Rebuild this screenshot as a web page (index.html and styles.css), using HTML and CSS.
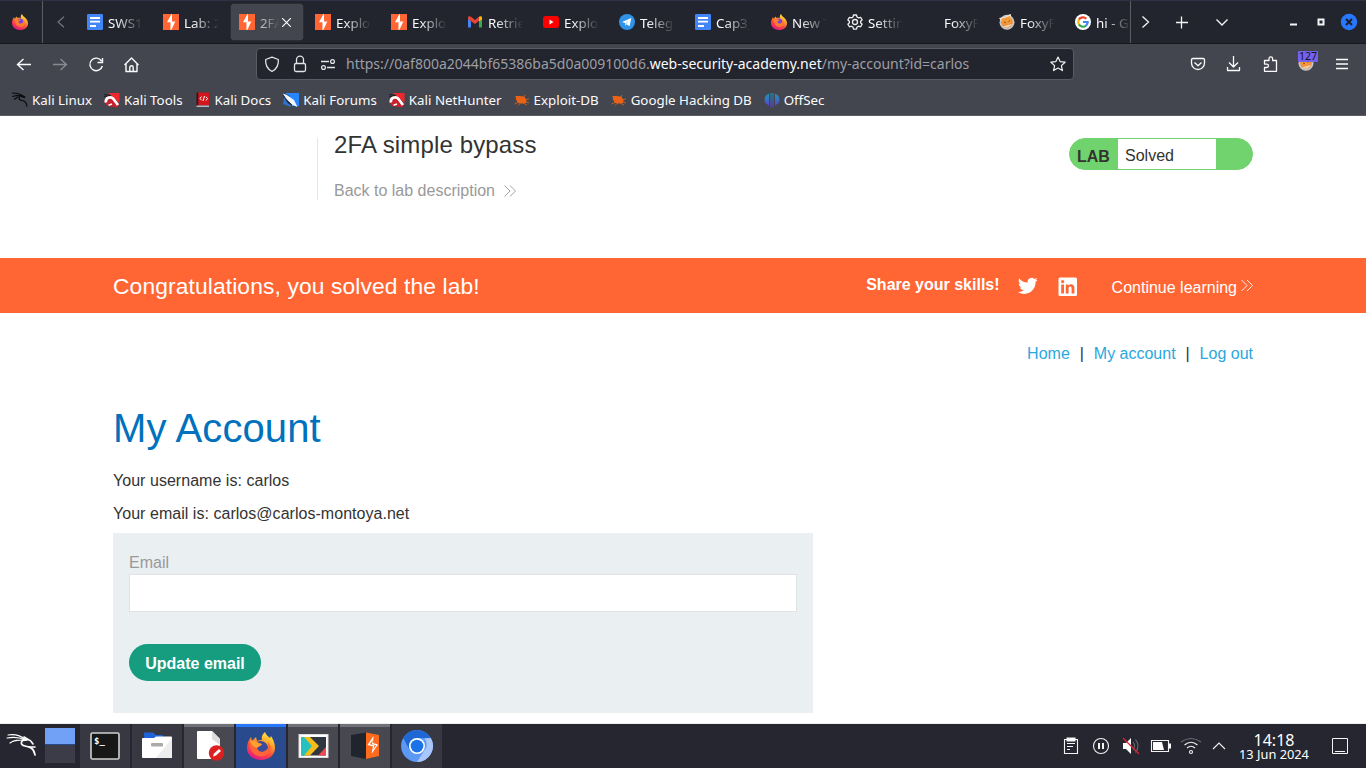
FILE: index.html
```html
<!DOCTYPE html>
<html lang="en">
<head>
<meta charset="utf-8">
<title>2FA simple bypass</title>
<link rel="stylesheet" href="styles.css">
</head>
<body>
<svg width="0" height="0" class="defs">
  <defs>
    <linearGradient id="ffBody" x1=".8" y1="0" x2=".3" y2="1"><stop offset="0" stop-color="#fff04a"/><stop offset=".35" stop-color="#ffa52a"/><stop offset=".65" stop-color="#ff4a3c"/><stop offset="1" stop-color="#e0178c"/></linearGradient>
    <linearGradient id="offG" gradientUnits="userSpaceOnUse" x1="0" y1="0" x2="0" y2="16"><stop offset="0" stop-color="#12a5a8"/><stop offset="1" stop-color="#6435e0"/></linearGradient>
    <symbol id="firefox" viewBox="0 0 32 32">
      <path d="M20 0c1 3 3 5 6 7 3 3 6 6 6 12 0 8-7 13-16 13S0 26 0 18c0-5 2-9 4-12l1 4 4-5 2 3c2-1 5-1 7 0-1-3 0-6 2-8z" fill="url(#ffBody)"/>
      <circle cx="16" cy="16" r="7" fill="#7a43df"/>
      <path d="M5 9c3-1 6 0 8 2 2 0 3 0 4 1-1 2-4 2-4 4 1 4 6 4 9 1 1-3 0-5-1-7 4 2 6 7 4 11-2 5-9 7-14 3-4-3-6-8-6-15z" fill="#ff7a2c"/>
    </symbol>
    <symbol id="firefoxBig" viewBox="0 0 28 28">
      <path d="M18 0c1 3 3 4 5 6l1-2c2 3 4 7 4 12 0 7-6 12-14 12S0 23 0 16c0-5 2-8 4-11l1 4 4-4 1 4c2-1 4-1 5-1-1-4 1-6 3-8z" fill="url(#ffBody)"/>
      <path d="M10 10c5-3 11 1 11 6 0 4-4 5-7 5-5 0-8-3-8-7 1-1 2 0 3 0l5-2z" fill="#3b4c9c"/>
      <path d="M3 9c3-1 6 0 8 2l4 1c0 2-3 2-5 4 1 4 6 5 9 2 3-2 3-5 1-8 4 2 5 8 2 11-4 5-12 4-16 0-3-3-4-8-3-12z" fill="#ff6338"/>
      <path d="M3 9c3-1 6 0 8 2l4 1c-1 2-4 2-5 4-3-1-6-3-7-7z" fill="#ffa12c"/>
    </symbol>
    <symbol id="docs" viewBox="0 0 16 16"><rect width="16" height="16" rx="1.200" fill="#4285f4"/><path d="M3 4h10M3 7.700h10M3 12h6" stroke="#fff" stroke-width="1.800"/></symbol>
    <symbol id="burp" viewBox="0 0 16 16"><rect width="16" height="16" fill="#ff6633"/><path d="M8.500 0L4 8.300h3.500V16h.8l4-8.500H9V0z" fill="#fff"/></symbol>
    <symbol id="gmail" viewBox="0 0 16 16"><path d="M1 3v10.500h3V7.500z" fill="#4285f4"/><path d="M15 3v10.500h-3V7.500z" fill="#34a853"/><path d="M1 3.800C1 2 3 2 4 2.800L8 6l4-3.200v4L8 10 1 5z" fill="#ea4335"/><path d="M12 2.800C13 2 15 2 15 3.800V5.500L12 7.500z" fill="#fbbc04"/></symbol>
    <symbol id="youtube" viewBox="0 0 16 16"><rect y="2" width="16" height="12" rx="2.500" fill="#f00"/><path d="M6.500 5.500v5l4-2.500z" fill="#fff"/></symbol>
    <symbol id="telegram" viewBox="0 0 16 16"><circle cx="8" cy="8" r="8" fill="#2f93e8"/><path d="M3 8l9.300-4-1.700 8.200-3-2-1.300 1.500V9z" fill="#fff"/><path d="M6.300 9.200l3.800-3-2.600 3.700z" fill="#b5d8f4"/></symbol>
    <symbol id="gear" viewBox="0 0 16 16"><path d="M6.500 1h3l.5 2 1.600.9 2-.6 1.500 2.600-1.500 1.400v1.500l1.500 1.400-1.500 2.600-2-.6-1.600.9-.5 2h-3l-.5-2-1.600-.9-2 .6L.9 10.200 2.400 8.800V7.300L.9 5.900l1.500-2.600 2 .6L6 3z" fill="none" stroke="#eee" stroke-width="1.300" stroke-linejoin="round"/><circle cx="8" cy="8" r="2.500" fill="none" stroke="#eee" stroke-width="1.300"/></symbol>
    <symbol id="foxy" viewBox="0 0 16 16"><circle cx="8" cy="8.200" r="7.500" fill="#c3c5c9"/><circle cx="8" cy="8.200" r="5.800" fill="#f0913a"/><path d="M0 4l5-1 6-3 1 .5v4L7 6 2 7z" fill="#e9dfd2"/><path d="M2 5l5-1.500 4-1.500 2 5-4 3-5-1z" fill="#f59a37"/><path d="M4 12.500c3 2 7 1 9-2.500l-4 1z" fill="#e9d5b8"/><path d="M5 8l2 .5M11 6.500l-1.500 1" stroke="#8a5223"/></symbol>
    <symbol id="google" viewBox="0 0 16 16"><circle cx="8" cy="8" r="8" fill="#fff"/><g fill="none" stroke-width="2.200"><path d="M3.900 5.600A4.700 4.700 0 0 1 11.300 4.700" stroke="#ea4335"/><path d="M3.900 5.600a4.700 4.700 0 0 0 0 4.800" stroke="#fbbc05"/><path d="M3.900 10.400a4.700 4.700 0 0 0 7.100 1.200" stroke="#34a853"/><path d="M11 11.600A4.700 4.700 0 0 0 12.700 8H8" stroke="#4285f4"/></g></symbol>
    <symbol id="hunter" viewBox="0 0 16 16"><path d="M4 1H15.500V11z" fill="#f0262d"/><path d="M0 2.500l7 1M0 4.500l6-.5" stroke="#1d2025" stroke-width="1.200"/><path d="M.5 9C1 5 5 3 9 5l6.500 7.500-2.500 3-9-1.500C2 13 .5 11.500.5 9z" fill="#c5202c"/><path d="M2 10.500C1 6 6.500 3.500 9.500 7l4.500 6" fill="none" stroke="#fff" stroke-width="2.700"/><path d="M4.500 13.300L8 12" stroke="#fff" stroke-width="1.500"/></symbol>
    <symbol id="bug" viewBox="0 0 16 16"><path d="M2 4l3 0 5 .5 2.500 3.500-.5 3-4 .5-4-.5-2-3.500z" fill="#ed6115"/><path d="M1 4.500l3 2M.5 12L5 10M4 13.500l3-3M10 5l1-2M11 7.500l4-.5M11 9.500l4 1.500M9 11l4 2" stroke="#d9681e" stroke-width=".8"/></symbol>
    <symbol id="chev" viewBox="0 0 12 12"><path d="M.5.500L6 6 .5 11.500M6 .500L11.500 6 6 11.500" fill="none" stroke="currentColor" stroke-width=".9"/></symbol>
  </defs>
</svg>

<header class="browser">
  <div class="tabs">
    <div class="pinned"><svg class="i16"><use href="#firefox"/></svg></div>
    <div class="scroll-left"><svg width="8" height="12" viewBox="0 0 8 12"><path d="M7 .7L1 6l6 5.300" fill="none" stroke="#75767c" stroke-width="1.200"/></svg></div>
    <div class="tablist">
      <div class="tab"><svg class="i16"><use href="#docs"/></svg><span>SWS1</span></div>
      <div class="tab"><svg class="i16"><use href="#burp"/></svg><span>Lab: 2</span></div>
      <div class="tab active"><svg class="i16"><use href="#burp"/></svg><span>2FA</span><svg class="close" viewBox="0 0 8 8"><path d="M0 0l8 8M8 0L0 8" stroke="#fff" stroke-width="1"/></svg></div>
      <div class="tab"><svg class="i16"><use href="#burp"/></svg><span>Explo</span></div>
      <div class="tab"><svg class="i16"><use href="#burp"/></svg><span>Explo</span></div>
      <div class="tab"><svg class="i16"><use href="#gmail"/></svg><span>Retrie</span></div>
      <div class="tab"><svg class="i16"><use href="#youtube"/></svg><span>Explo</span></div>
      <div class="tab"><svg class="i16"><use href="#telegram"/></svg><span>Teleg</span></div>
      <div class="tab"><svg class="i16"><use href="#docs"/></svg><span>Cap3_</span></div>
      <div class="tab"><svg class="i16"><use href="#firefox"/></svg><span>New T</span></div>
      <div class="tab"><svg class="i16"><use href="#gear"/></svg><span>Settin</span></div>
      <div class="tab"><svg class="i16"></svg><span>FoxyP</span></div>
      <div class="tab"><svg class="i16"><use href="#foxy"/></svg><span>FoxyP</span></div>
      <div class="tab"><svg class="i16"><use href="#google"/></svg><span>hi - G</span></div>
    </div>
    <svg class="tab-controls" width="235" height="43" viewBox="1131 0 235 43" fill="none" stroke="#f5f5f6" stroke-width="1.300">
      <path d="M1142.500 16.500l6 5.500-6 5.500M1176 22.500h12M1181.500 16.500v12M1216.500 19.500l5.500 5.500 5.500-5.500"/>
      <path d="M1290 24.500h7M1318.500 19.500h5v5h-5z" stroke-width="2"/>
      <circle cx="1349" cy="22" r="8.200" fill="#2777ff" stroke="none"/><path d="M1346 19l6 6M1352 19l-6 6" stroke="#1c202c" stroke-width="2"/>
    </svg>
  </div>

  <div class="toolbar">
    <svg class="nav" width="150" height="40" viewBox="0 44 150 40" fill="none" stroke="#fbfbfe" stroke-width="1.400">
      <path d="M31 64.500H18M23.500 59l-6 5.500 6 5.500"/>
      <path d="M53 64.500h13M60.500 59l6 5.500-6 5.500" stroke="#8a8b91"/>
      <path d="M101.500 61A6.300 6.300 0 1 0 102.300 66M102.500 58v4.500H97.500"/>
      <path d="M124.500 65l7-7 7 7M126 64v7.500h11V64M129.800 71v-3.500a1.700 1.700 0 0 1 3.400 0V71" stroke-linejoin="round"/>
    </svg>
    <div class="url">
      <svg width="88" height="30" viewBox="257 49 88 30" fill="none" stroke="#e4e4e7" stroke-width="1.300">
        <path d="M272 57.200l6.300 2.300c.5 5-1.800 9.500-6.300 12-4.500-2.500-6.800-7-6.300-12z" stroke-linejoin="round"/>
        <rect x="294.500" y="63.500" width="11" height="8" rx="1.500"/><path d="M296.500 63v-3.300a3.500 3.500 0 0 1 7 0V63"/>
        <path d="M321 61.500h8M327 67.500h8"/><circle cx="332.500" cy="61.500" r="1.900"/><circle cx="323.500" cy="67.500" r="1.900"/>
      </svg>
      <p>https://0af800a2044bf65386ba5d0a009100d6.<b>web-security-academy.net</b>/my-account?id=carlos</p>
      <svg class="star" width="16" height="16" viewBox="0 0 16 16"><path d="M8 1l2.100 4.600 5 .6-3.700 3.400 1 5L8 12.100l-4.400 2.500 1-5L.9 6.200l5-.6z" fill="none" stroke="#f0f0f2" stroke-width="1.200" stroke-linejoin="round"/></svg>
    </div>
    <div class="tools">
      <svg width="176" height="40" viewBox="1190 44 176 40" fill="none" stroke="#fbfbfe" stroke-width="1.300">
        <path d="M1193 58.500h10.200q1.300 0 1.300 1.300V63a6.500 6.500 0 0 1-13 0v-3.200q0-1.300 1.500-1.300zM1194.500 62.500l3.500 3.200 3.500-3.200" stroke-linejoin="round"/>
        <path d="M1233.500 56v10.500M1229 62.500l4.500 4.500 4.500-4.500M1227.500 67v3.500h12V67" stroke-linejoin="round"/>
        <path d="M1264.500 71.300v-3.800h2.300a1.700 1.700 0 0 0 0-3.400h-2.300v-3.600h4.500v-1.800a1.800 1.800 0 0 1 3.600 0v1.800h3.900v10.800z" stroke-linejoin="round"/>
        <path d="M1336 59.500h12M1336 64h12M1336 68.500h12"/>
      </svg>
      <div class="foxy"><svg class="i16"><use href="#foxy"/></svg><span>127</span></div>
    </div>
  </div>

  <nav class="bookmarks">
    <a><svg class="i16" viewBox="0 0 16 16" fill="none" stroke="#08090a" stroke-width="1.200"><path d="M0 1l6 .5 4 2M0 4.500l5-1 5 .5M2 7.500l4-2.500M10 4c-4 0-4 4 0 4.500 3 .3 4.500 2 5 6"/><path d="M9 3.500l4 2" stroke-width="2"/></svg>Kali Linux</a>
    <a><svg class="i16"><use href="#hunter"/></svg>Kali Tools</a>
    <a><svg class="i16" viewBox="0 0 16 16"><path d="M2 .500h12v13H2z" fill="#d3161b"/><path d="M1.500.500h1.800v13l-1.800 1z" fill="#3d1018"/><path d="M1.500 13.500H14V15H1.500z" fill="#aeb9c6"/><path d="M6.500 4.500L5 6.500l1.500 1.700M11 4.800l1.500 1.700L11 8.500M9.500 4L8 9" fill="none" stroke="#fff"/></svg>Kali Docs</a>
    <a><svg class="i16" viewBox="0 0 16 16"><path d="M2 1h14v13H9z" fill="#2786ff"/><path d="M2 1L0 12l8 3-2-6z" fill="#2786ff" opacity=".7"/><path d="M0 1.500L4 3l7 5 3.500 7-5-2L3 7z" fill="#f4f6f8"/><path d="M0 3l4 5 5 5-4-2zM1 1l6 3.500" fill="#20252c" stroke="#20252c" stroke-width=".5"/></svg>Kali Forums</a>
    <a><svg class="i16"><use href="#hunter"/></svg>Kali NetHunter</a>
    <a><svg class="i16"><use href="#bug"/></svg>Exploit-DB</a>
    <a><svg class="i16"><use href="#bug"/></svg>Google Hacking DB</a>
    <a><svg class="i16" viewBox="0 0 16 16"><path d="M5 1.500v12C-1 11-1 4 5 1.500zM7.500 1v14.500H6.500V1zM9.500 1v14.500H8.500V1zM11 1.500v12c6-2.500 6-9.500 0-12z" fill="url(#offG)"/></svg>OffSec</a>
  </nav>
</header>

<main class="page">
  <section class="lab wrap">
    <div class="lab-title">
      <h2>2FA simple bypass</h2>
      <a>Back to lab description <svg width="12" height="12"><use href="#chev"/></svg></a>
    </div>
    <div class="badge"><b>LAB</b><span>Solved</span></div>
  </section>
  <section class="banner">
    <div class="wrap">
      <h3>Congratulations, you solved the lab!</h3>
      <b>Share your skills!</b>
      <svg class="twitter" width="20" height="18" viewBox="0 0 24 20"><path d="M23.600 2.400c-.9.400-1.800.6-2.800.8 1-.6 1.800-1.500 2.100-2.700-.9.600-2 1-3.100 1.200A4.900 4.900 0 0 0 11.500 6C7.500 5.900 3.900 4 1.500 1 .2 3.200.9 6 3 7.500c-.8 0-1.500-.2-2.200-.6 0 2.200 1.500 4.300 3.900 4.800-.7.200-1.500.2-2.200.1.600 2 2.500 3.300 4.600 3.400A9.900 9.900 0 0 1 0 17.200c9.500 6 21.200-.5 21.200-12.200 1-.7 1.800-1.600 2.400-2.600z" fill="#fff"/></svg>
      <svg class="linkedin" width="20" height="20" viewBox="0 0 20 20"><rect x=".5" y=".5" width="18.500" height="18.500" rx="1.500" fill="#fff"/><g fill="#f63"><path d="M3.200 7.500H6v9H3.200zM7.800 7.500h2.600v1.300c1.600-2.500 6-2 6 2.200v5.500h-2.800v-5c0-3-3-2.500-3 0v5H7.800z"/><circle cx="4.600" cy="4.600" r="1.600"/></g></svg>
      <a>Continue learning<svg width="12" height="13"><use href="#chev"/></svg></a>
    </div>
  </section>
  <nav class="links wrap"><a>Home</a><i>|</i><a>My account</a><i>|</i><a>Log out</a></nav>
  <section class="account wrap">
    <h1>My Account</h1>
    <p>Your username is: carlos</p>
    <p>Your email is: carlos@carlos-montoya.net</p>
    <form>
      <label for="email">Email</label>
      <input id="email" type="email">
      <button type="button">Update email</button>
    </form>
  </section>
</main>

<footer class="taskbar">
  <svg class="kali" width="45" height="44" viewBox="0 724 45 44" fill="none" stroke="#fff" stroke-linecap="round"><path d="M8 735c6-1 12 0 18 5M7 738c6-1 12-1 18 2M10 743c4-3 8-3 14-3" stroke-width="1.200"/><path d="M26 740c-6 0-6 5-1 6 5 1 9 2 10 9" stroke-width="1.700"/><path d="M26 740c4-1 5 1 7 4M29 747l6 0M24 737l5 3" stroke-width="1.600"/></svg>
  <div class="pager"><i></i></div>
  <div class="task"><svg width="32" height="32" viewBox="0 0 32 32"><rect x="2" y="3" width="28" height="26" rx="1.500" fill="#171717" stroke="#d0d0ce" stroke-width="1.600"/><text x="5" y="14" class="prompt">$_</text></svg></div>
  <div class="task"><svg width="32" height="32" viewBox="0 0 32 32"><path d="M3 3.500q0-1 1-1h8l3 2.500h6q1 0 1 1v5H3z" fill="#1f63d6"/><path d="M2 8h11l2-1.500h15q1 0 1 1V27q0 1-1 1H2q-1 0-1-1V9q0-1 1-1z" fill="#fff"/><path d="M31 8v20H15z" fill="#ededed"/><rect x="10" y="13" width="12" height="3.500" rx="1" fill="#aaa"/></svg></div>
  <div class="task open"><svg width="32" height="32" viewBox="0 0 32 32"><path d="M5 1h14l8 8v20H5q-1 0-1-1V2q0-1 1-1z" fill="#fff"/><path d="M19 1l8 8v6l-8-6z" fill="#ddd"/><circle cx="23.500" cy="23" r="7.700" fill="#dc2020"/><path d="M20 26.500l1-3 5-4.500 2 2-5 4.500z" fill="#fff"/></svg></div>
  <div class="task current"><svg width="28" height="28" viewBox="0 0 28 28"><use href="#firefoxBig"/></svg></div>
  <div class="task open"><svg width="32" height="32" viewBox="0 0 32 32"><rect x="2" y="4.500" width="29" height="23" fill="#fff" stroke="#ddd"/><path d="M4 7h25v18.500H4z" fill="#303641"/><path d="M4 7h4l8 9-8 9.500H4z" fill="#26c0be"/><path d="M7 7h6l9 9-9 9.500H7l8-9.500z" fill="#f4bd19"/><path d="M29 17v8.500h-8z" fill="#f04a50"/></svg></div>
  <div class="task open"><svg width="32" height="32" viewBox="0 0 32 32"><path d="M2 5l15-2.500V29L2 26z" fill="#1f242d"/><path d="M17 2.500L30 5v21l-13 3z" fill="#ff6b1c"/><path d="M24.500 6L18.500 15l5.500 1.500L22.500 24 29 14.500 24 13z" fill="#fff"/><path d="M23.800 10l-3 4.200 4.700 1-1 4 2.500-4-4-1z" fill="#ff6b1c"/></svg></div>
  <div class="task"><svg width="34" height="34" viewBox="0 0 32 32"><circle cx="16" cy="16" r="15" fill="#5d98f5"/><path d="M3 8.500A15 15 0 0 1 29 8.500H16a8 8 0 0 0-7 11z" fill="#1f67d2"/><path d="M29 8.500A15 15 0 0 1 16 31l7-11a8 8 0 0 0 0-11z" fill="#a9c7fa"/><circle cx="16" cy="16" r="7.500" fill="#fff"/><circle cx="16" cy="16" r="6" fill="#1a73e8"/></svg></div>
  <svg class="tray" width="174" height="44" viewBox="1060 724 174 44" fill="none" stroke="#f3f3f3" stroke-width="1.100">
    <path d="M1064.500 739.500h13v14h-13zM1067 743.500h8M1067 746.500h6M1067 749.500h3"/><path d="M1067 738h8v3h-8z" fill="#fff"/>
    <circle cx="1101" cy="746" r="7.500"/><path d="M1099 743v6M1103 743v6" stroke-width="2"/>
    <path d="M1123 743h3l5-5v16l-5-5h-3z" fill="#fff" stroke="none"/><path d="M1133 742q3 4 0 8M1135.500 739.500q5 6.500 0 13" stroke="#686a70"/><path d="M1123 738l16 16" stroke="#d92430" stroke-width="1.300"/>
    <path d="M1151.500 740.500h17v11h-17z"/><path d="M1153 742h9l2 8h-11zM1169 743.500h2v5h-2z" fill="#fff" stroke="none"/>
    <circle cx="1191" cy="752" r="1.500"/><path d="M1187 748q4-3.500 8 0M1184.500 745q6.500-5.500 13 0"/><path d="M1181 742q10-7 20 0" stroke="#6d6e75"/><path d="M1213 749l6-6 6 6"/>
  </svg>
  <div class="clock"><span>14:18</span><small>13 Jun 2024</small></div>
  <svg class="desk" width="16" height="16" viewBox="0 0 16 16" fill="none" stroke="#f5f5f5"><path d="M.5.500h15v15H.5zM3 13.500h10"/></svg>
</footer>
</body>
</html>
```
FILE: styles.css
```css
* { box-sizing: border-box; }
body { margin: 0; width: 1366px; height: 768px; overflow: hidden; display: flex; flex-direction: column; background: #fff; font-family: "Liberation Sans", Arial, sans-serif; }
.defs { position: absolute; }
svg { display: block; flex: none; }
h1, h2, h3, p { margin: 0; font-weight: 400; }
.i16 { width: 16px; height: 16px; }

.browser { height: 116px; flex: none; font-family: "Noto Sans", sans-serif; font-size: 13.33px; color: #fbfbfe; background: #44464f; border-bottom: 1px solid #5d5e66; }
.tabs { height: 44px; display: flex; background: #23252e; border-top: 1px solid #303147; border-bottom: 1px solid #17181e; }
.pinned { width: 43px; padding: 13px 0 0 12px; border-right: 1px solid #5b5c63; }
.scroll-left { width: 36px; padding: 15px 0 0 14px; }
.tablist { width: 1052px; padding-top: 3px; display: flex; gap: 4px; overflow: hidden; border-right: 1px solid #5b5c63; }
.tab { width: 72px; height: 36px; flex: none; padding: 0 8px; display: flex; align-items: center; border-radius: 4px; }
.tab span { width: 36px; flex: none; margin-left: 5px; padding-top: 2px; overflow: hidden; white-space: nowrap; -webkit-mask-image: linear-gradient(to right, #000 22%, transparent 97%); mask-image: linear-gradient(to right, #000 22%, transparent 97%); }
.active { background: #44464f; box-shadow: 0 0 1px #777; }
.tab.active span { width: 20px; color: #b6b7bb; }
.close { width: 9px; height: 9px; margin-left: 2px; }
.tab-controls { margin-top: -1px; }

.toolbar { height: 40px; display: flex; align-items: flex-start; }
.nav { margin-right: 106px; }
.url { width: 818px; height: 32px; margin-top: 4px; display: flex; align-items: center; background: #23252e; border: 1px solid #5a5b63; border-radius: 4px; }
.url p { flex: 1; padding: 0 0 2px 1px; font-size: 14px; color: #9d9ea5; white-space: nowrap; }
.url b { font-weight: 400; color: #fbfbfe; }
.star { margin-right: 7px; }
.tools { position: relative; margin-left: 116px; }
.foxy { position: absolute; left: 108px; top: 11px; }
.foxy span { position: absolute; left: 0; top: -4px; width: 20px; height: 11px; background: #7561ec; border-radius: 1px; color: #15141a; font-size: 10.500px; line-height: 11px; text-align: center; }
.bookmarks { height: 31px; padding-left: 12px; display: flex; align-items: center; gap: 12px; }
.bookmarks a { display: flex; align-items: center; gap: 4px; white-space: nowrap; }

.page { height: 608px; flex: none; color: #333332; font-size: 16px; border-bottom: 1px solid #eee; overflow: hidden; }
.wrap { width: 1140px; margin: 0 auto; }
.lab { height: 142px; padding: 22px 0 0 204px; display: flex; justify-content: space-between; align-items: flex-start; }
.lab-title { height: 62px; padding-left: 16px; border-left: 1px solid #e6e6e6; }
.lab-title h2 { margin-top: -7px; font-size: 24px; line-height: 28px; letter-spacing: .15px; }
.lab-title a { margin-top: 23px; display: flex; align-items: center; gap: 9px; line-height: 18px; color: #999; }
.lab-title svg { margin-top: -1px; }
.badge { width: 184px; height: 32px; display: flex; background: #71d36e; border: 1px solid #71d36e; border-radius: 16px; overflow: hidden; }
.badge b { width: 48px; padding-left: 7px; line-height: 35px; }
.badge span { width: 98px; padding-left: 7px; line-height: 33px; background: #fff; }
.banner { height: 55px; background: #f63; color: #fff; }
.banner .wrap { height: 55px; display: flex; align-items: center; }
.banner h3 { flex: 1; padding-top: 2px; font-size: 22.8px; letter-spacing: .12px; }
.banner b { padding-bottom: 2px; }
.twitter { margin-left: 18px; }
.linkedin { margin: 2px 1px 0 20px; }
.banner a { margin-left: 33px; padding-top: 4px; display: flex; gap: 4px; }
.links { height: 82px; padding-top: 32px; display: flex; justify-content: flex-end; line-height: 18px; color: #29a7df; }
.links i { width: 24px; text-align: center; font-style: normal; color: #333; }
.account h1 { padding-top: 9px; margin-bottom: 19px; font-size: 40px; line-height: 49px; letter-spacing: .1px; color: #0071bc; }
.account p { height: 33px; line-height: 18px; letter-spacing: .035px; }
.account p + p { height: 28px; }
form { width: 700px; height: 180px; padding: 21px 16px 0; display: flex; flex-direction: column; align-items: flex-start; background: #eaeff2; }
label { line-height: 18px; color: #999; }
input { width: 668px; height: 38px; margin-top: 2px; padding: 0 8px; border: 1px solid #e0e3e4; background: #fff; }
button { width: 132px; height: 37px; margin-top: 32px; padding: 2px 0 0; border: 0; border-radius: 19px; background: #169c7f; color: #fff; font: bold 16px "Liberation Sans", sans-serif; }

.taskbar { height: 44px; flex: none; display: flex; align-items: stretch; color: #fff; background: #25262f; font-family: "Noto Sans", sans-serif; }
.pager { width: 30px; height: 35px; margin: 4px 5px 0 0; background: #3b3c47; }
.pager i { display: block; height: 17px; background: #71a1f7; border-bottom: 1px solid #294b8c; }
.task { width: 50px; margin-right: 2px; display: flex; align-items: center; justify-content: center; background: #373842; }
.open { background: #484950; border-top: 3px solid #707177; }
.open svg { margin-top: -3px; }
.current { background: #294a8d; border-top: 3px solid #2777ff; }
.current svg { margin-top: -3px; }
.prompt { fill: #fff; font: bold 9px "DejaVu Sans Mono", monospace; }
.tray { margin-left: 616px; }
.clock { width: 80px; display: flex; flex-direction: column; align-items: center; }
.clock span { margin-top: 7px; font-size: 16px; line-height: 18px; }
.clock small { font-size: 12.8px; line-height: 10px; white-space: nowrap; }
.desk { margin: 14px 0 0 18px; }
```
